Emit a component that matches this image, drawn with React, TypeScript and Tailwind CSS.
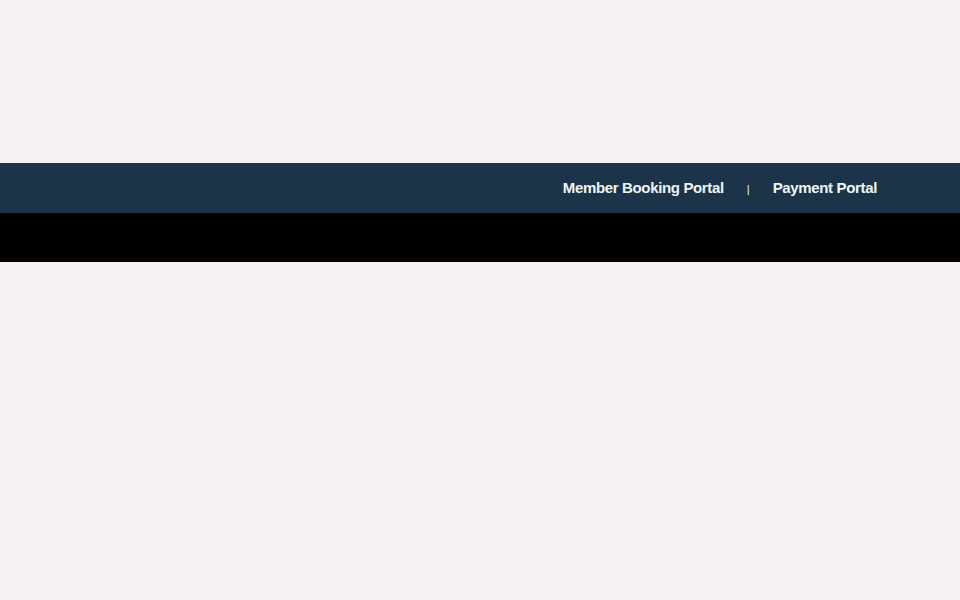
export default function App() {
  return (
    <div className="min-h-[600px] w-full bg-[#f6f2f1]" style={{ fontFamily: '"Liberation Sans", Arial, sans-serif' }}>
      <div className="h-[163px]" />
      <nav className="flex h-[50px] items-center justify-end bg-[#1c344a] pr-[83px]">
        <a className="text-[15px] font-bold tracking-[-0.35px] text-[#f1f4f7]">Member Booking Portal</a>
        <span className="mx-[23px] pt-[2px] text-[11px] text-[#f1f4f7]">|</span>
        <a className="text-[15px] font-bold tracking-[-0.35px] text-[#f1f4f7]">Payment Portal</a>
      </nav>
      <div className="h-[49px] bg-black" />
    </div>
  );
}
